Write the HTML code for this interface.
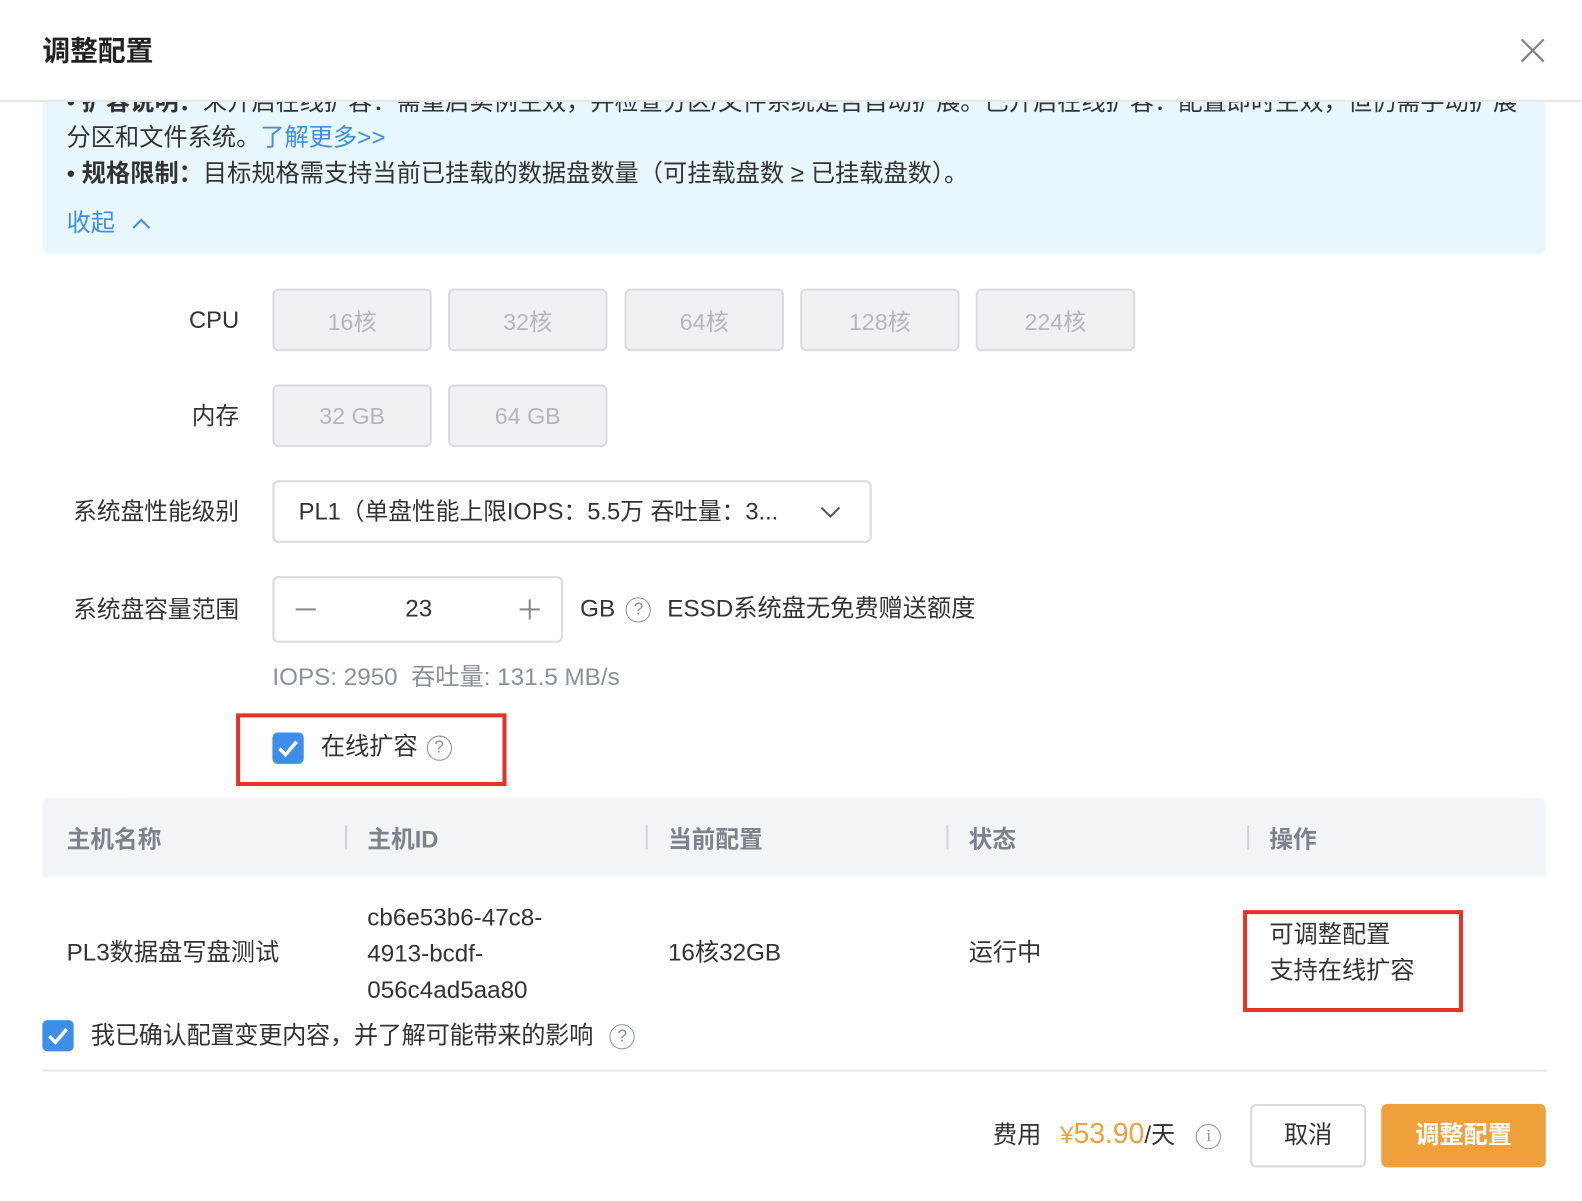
<!DOCTYPE html>
<html><head><meta charset="utf-8"><style>
*{box-sizing:border-box;margin:0;padding:0}
body{width:1582px;height:1190px;background:#fff;font-family:"Liberation Sans","Noto Sans CJK SC",sans-serif;color:#333;position:relative;overflow:hidden;font-size:24px}
#w{position:absolute;left:0;top:0;width:1582px;height:1190px;transform:scale(1.009);transform-origin:0 0}
.a{position:absolute;white-space:nowrap}
.btn{position:absolute;height:62px;width:158px;border:2px solid #d9dbde;border-radius:6px;background:#f0f1f3;color:#b3b6bb;font-size:23px;display:flex;align-items:center;justify-content:center}
.lbl{position:absolute;right:1345px;font-size:23.5px;color:#333;white-space:nowrap;line-height:30px}
.q{display:inline-block;width:25px;height:25px;border:1.6px solid #8a9099;border-radius:50%;font-size:17px;line-height:22px;text-align:center;color:#8a9099;vertical-align:middle}
.cb{position:absolute;width:31px;height:31px;background:#3d8ee8;border-radius:5px}
.th{position:absolute;top:813px;font-weight:bold;color:#7b828c;font-size:23.5px}
.sep{position:absolute;top:818px;width:2px;height:24px;background:#d0d3d8}
</style></head><body><div id="w">
<div class="a" style="left:42px;top:60px;width:1490px;height:192px;background:#e8f6fe;border-radius:0 0 8px 8px"></div>
<div class="a" style="left:66px;top:86px;line-height:32px;color:#333">• <b>扩容说明：</b>未开启在线扩容：需重启实例生效，并检查分区/文件系统是否自动扩展。已开启在线扩容：配置即时生效，但仍需手动扩展</div>
<div class="a" style="left:66px;top:121px;line-height:32px">分区和文件系统。<span style="color:#3b8fe6">了解更多&gt;&gt;</span></div>
<div class="a" style="left:66px;top:157px;line-height:32px">• <b>规格限制：</b>目标规格需支持当前已挂载的数据盘数量（可挂载盘数 ≥ 已挂载盘数）。</div>
<div class="a" style="left:66px;top:206px;line-height:32px;color:#3b8fe6">收起 <svg width="22" height="14" style="margin-left:8px" viewBox="0 0 22 14"><path d="M3 11 L11 3 L19 11" fill="none" stroke="#3b8fe6" stroke-width="2"/></svg></div>
<div class="a" style="left:0;top:0;width:1582px;height:101px;background:#fff;border-bottom:2px solid #e3e5e8"></div>
<div class="a" style="left:42px;top:32px;font-size:27.5px;font-weight:bold;color:#222;line-height:38px">调整配置</div>
<svg class="a" style="left:1505px;top:36px" width="28" height="28" viewBox="0 0 28 28"><path d="M3 3 L25 25 M25 3 L3 25" stroke="#7d838b" stroke-width="2.2"/></svg>
<div class="lbl" style="top:302px">CPU</div>
<div class="btn" style="left:270px;top:286px">16核</div>
<div class="btn" style="left:444px;top:286px">32核</div>
<div class="btn" style="left:619px;top:286px">64核</div>
<div class="btn" style="left:793px;top:286px">128核</div>
<div class="btn" style="left:967px;top:286px">224核</div>
<div class="lbl" style="top:397px">内存</div>
<div class="btn" style="left:270px;top:381px">32 GB</div>
<div class="btn" style="left:444px;top:381px">64 GB</div>
<div class="lbl" style="top:492px">系统盘性能级别</div>
<div class="a" style="left:270px;top:476px;width:594px;height:62px;border:2px solid #d9dbde;border-radius:6px;padding-left:24px;line-height:58px;color:#333;font-size:23.5px">PL1（单盘性能上限IOPS：5.5万 吞吐量：3...
<svg style="position:absolute;right:28px;top:22px" width="22" height="14" viewBox="0 0 22 14"><path d="M2 3 L11 12 L20 3" fill="none" stroke="#555" stroke-width="2"/></svg></div>
<div class="lbl" style="top:589px">系统盘容量范围</div>
<div class="a" style="left:270px;top:571px;width:288px;height:66px;border:2px solid #d9dbde;border-radius:6px"></div>
<div class="a" style="left:293px;top:603px;width:20px;height:2px;background:#888"></div>
<div class="a" style="left:370px;top:588px;width:90px;text-align:center;line-height:32px">23</div>
<div class="a" style="left:515px;top:603px;width:20px;height:2px;background:#888"></div>
<div class="a" style="left:524px;top:594px;width:2px;height:20px;background:#888"></div>
<div class="a" style="left:575px;top:588px;line-height:32px">GB <span class="q" style="margin-left:4px">?</span><span style="margin-left:16px">ESSD系统盘无免费赠送额度</span></div>
<div class="a" style="left:270px;top:656px;line-height:32px;color:#8a9099">IOPS: 2950&nbsp; 吞吐量: 131.5 MB/s</div>
<div class="a" style="left:234px;top:707px;width:268px;height:72px;border:4px solid #e53325"></div>
<div class="cb" style="left:270px;top:726px"><svg width="31" height="31" viewBox="0 0 31 31"><path d="M7 16 L13 22 L24 9" fill="none" stroke="#fff" stroke-width="3.5"/></svg></div>
<div class="a" style="left:318px;top:725px;line-height:32px">在线扩容 <span class="q" style="margin-left:2px">?</span></div>
<div class="a" style="left:42px;top:791px;width:1490px;height:78px;background:#f3f4f6;border-radius:6px 6px 0 0"></div>
<div class="th" style="left:66px">主机名称</div>
<div class="sep" style="left:342px"></div><div class="th" style="left:364px">主机ID</div>
<div class="sep" style="left:640px"></div><div class="th" style="left:662px">当前配置</div>
<div class="sep" style="left:938px"></div><div class="th" style="left:960px">状态</div>
<div class="sep" style="left:1236px"></div><div class="th" style="left:1258px">操作</div>
<div class="a" style="left:66px;top:929px;line-height:32px">PL3数据盘写盘测试</div>
<div class="a" style="left:364px;top:892px;line-height:36px">cb6e53b6-47c8-<br>4913-bcdf-<br>056c4ad5aa80</div>
<div class="a" style="left:662px;top:929px;line-height:32px">16核32GB</div>
<div class="a" style="left:960px;top:929px;line-height:32px">运行中</div>
<div class="a" style="left:1232px;top:902px;width:218px;height:101px;border:4px solid #e53325"></div>
<div class="a" style="left:1258px;top:909px;line-height:36px">可调整配置<br>支持在线扩容</div>
<div class="cb" style="left:42px;top:1011px"><svg width="31" height="31" viewBox="0 0 31 31"><path d="M7 16 L13 22 L24 9" fill="none" stroke="#fff" stroke-width="3.5"/></svg></div>
<div class="a" style="left:90px;top:1011px;line-height:32px;letter-spacing:-0.3px">我已确认配置变更内容，并了解可能带来的影响 <span class="q" style="margin-left:10px">?</span></div>
<div class="a" style="left:42px;top:1060px;width:1490px;height:2px;background:#e3e5e8"></div>
<div class="a" style="left:984px;top:1107px;line-height:34px">费用 <span style="color:#f0a03a;margin-left:12px">¥</span><span style="color:#f0a03a;font-size:28px">53.90</span>/天 <span class="q" style="margin-left:14px;font-family:'Liberation Serif',serif">i</span></div>
<div class="a" style="left:1239px;top:1094px;width:115px;height:63px;border:2px solid #d5d8dc;border-radius:6px;text-align:center;line-height:59px;font-size:24px">取消</div>
<div class="a" style="left:1369px;top:1094px;width:163px;height:63px;background:#f0a03a;border-radius:6px;text-align:center;line-height:63px;color:#fff;font-size:24px;font-weight:bold">调整配置</div>
</div></body></html>
